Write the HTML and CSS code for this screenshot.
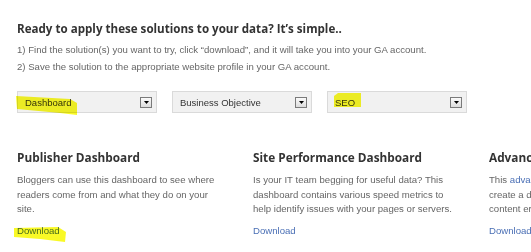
FILE: index.html
```html
<!DOCTYPE html>
<html>
<head>
<meta charset="utf-8">
<link rel="stylesheet" href="styles.css">
</head>
<body>
<div class="page">
  <h2 class="title">Ready to apply these solutions to your data? It’s simple..</h2>
  <p class="steps">1) Find the solution(s) you want to try, click “download”, and it will take you into your GA account.<br>2) Save the solution to the appropriate website profile in your GA account.</p>
  <div class="filters">
    <div class="select"><span class="val">Dashboard</span><span class="btn"><svg width="5" height="3" viewBox="0 0 5 3"><path d="M0 0H5L2.5 3Z" fill="#000"/></svg></span></div>
    <div class="select"><span class="val">Business Objective</span><span class="btn"><svg width="5" height="3" viewBox="0 0 5 3"><path d="M0 0H5L2.5 3Z" fill="#000"/></svg></span></div>
    <div class="select"><span class="val">SEO</span><span class="btn"><svg width="5" height="3" viewBox="0 0 5 3"><path d="M0 0H5L2.5 3Z" fill="#000"/></svg></span></div>
  </div>
  <div class="cards">
    <div class="card">
      <h3>Publisher Dashboard</h3>
      <p>Bloggers can use this dashboard to see where readers come from and what they do on your site.</p>
      <a class="dl" href="#">Download</a>
    </div>
    <div class="card">
      <h3>Site Performance Dashboard</h3>
      <p>Is your IT team begging for useful data? This dashboard contains various speed metrics to help identify issues with your pages or servers.</p>
      <a class="dl" href="#">Download</a>
    </div>
    <div class="card card-cut">
      <h3>Advanced Content</h3>
      <p>This <a href="#">advan</a><br>create a d<br>content er</p>
      <a class="dl" href="#">Download</a>
    </div>
  </div>
</div>
<svg class="marker" width="531" height="252" viewBox="0 0 531 252">
  <path d="M16 96 L70 99 L77 103 L77 115 L60 113 L17 109 Z" fill="#f8f800" fill-opacity="0.85"/>
  <path d="M338 93 L361 93 L361 107 L334 107 L334 96 Z" fill="#f8f800" fill-opacity="0.85"/>
  <path d="M14 228 L58 227 L66 232 L65 242 L40 239 L14 237 Z" fill="#f8f800" fill-opacity="0.85"/>
</svg>
</body>
</html>
```
FILE: styles.css
```css
html, body { margin: 0; padding: 0; background: #fff; }
body { width: 531px; height: 252px; overflow: hidden; position: relative; }
.page { padding: 20px 0 0 17px; }
.title {
  margin: 0;
  font-family: "Open Sans", sans-serif;
  font-weight: 700;
  font-size: 11.6px;
  line-height: 18px;
  color: #333;
}
.steps {
  margin: 3px 0 0;
  font-family: "Liberation Sans", Arial, sans-serif;
  font-size: 9.6px;
  line-height: 17px;
  color: #666;
}
.filters { display: flex; gap: 15px; margin-top: 16px; }
.select {
  height: 20px;
  border: 1px solid #dadada;
  background: #f1f1f1;
  display: flex; align-items: center; justify-content: space-between;
  padding: 0 4px 0 7px;
  box-sizing: content-box;
  width: 127px;
  font-family: "Liberation Sans", Arial, sans-serif;
  font-size: 9.5px;
  color: #333;
}
.btn {
  width: 10px; height: 9px;
  border: 1px solid #7a7a7a;
  background: linear-gradient(#fafafa, #dcdcdc);
  display: flex; align-items: center; justify-content: center;
}
.cards {
  display: grid;
  grid-template-columns: 200px 200px 60px;
  column-gap: 36px;
  margin-top: 36px;
}
.card-cut { overflow: hidden; white-space: nowrap; }
.card h3 {
  margin: 0;
  font-family: "Open Sans", sans-serif;
  font-weight: 700;
  font-size: 11.8px;
  line-height: 16px;
  color: #333;
}
.card p {
  margin: 8px 0 0;
  font-family: "Liberation Sans", Arial, sans-serif;
  font-size: 9.6px;
  line-height: 14.5px;
  color: #666;
}
.card p a { color: #4a6fb5; text-decoration: none; }
.dl {
  display: block;
  margin-top: 7px;
  font-family: "Liberation Sans", Arial, sans-serif;
  font-size: 9.6px;
  line-height: 14px;
  color: #4a6fb5;
  text-decoration: none;
}
.marker { position: absolute; left: 0; top: 0; pointer-events: none; mix-blend-mode: multiply; }
```
